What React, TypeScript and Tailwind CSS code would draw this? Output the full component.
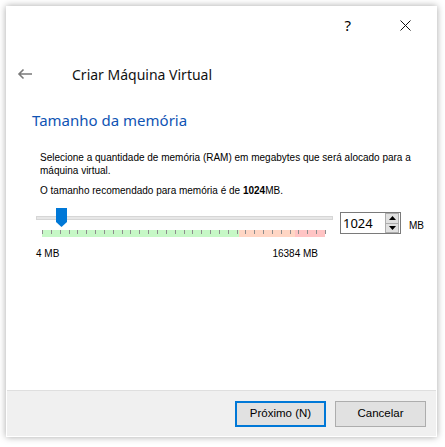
import React from 'react';

const ticks = Array.from({ length: 33 }, (_, i) => i);

function TickBar() {
  const w = 283;
  const step = w / 32;
  return (
    <svg width={w + 1} height={7} className="block">
      <rect x={0} y={0} width={197} height={7} fill="#c6f8c6" />
      <rect x={197} y={0} width={56} height={7} fill="#ffd6c4" />
      <rect x={253} y={0} width={30} height={7} fill="#ffc4c4" />
      {ticks.map((i) => (
        <rect key={i} x={Math.round(i * step)} y={0} width={1} height={4} fill="#8e8e8e" />
      ))}
    </svg>
  );
}

function Spin() {
  return (
    <div className="flex h-[22px] w-[61px] items-center border border-[#7a7a7a] bg-white">
      <span className="flex-1 pl-[2px] text-[13px] leading-none text-black">1024</span>
      <div className="mr-px flex h-[20px] w-[14px] flex-col">
        <div className="flex flex-1 items-center justify-center border border-[#adadad] bg-[#e1e1e1]">
          <svg width="7" height="4"><path d="M0 4 L3.5 0 L7 4 Z" fill="#000" /></svg>
        </div>
        <div className="flex flex-1 items-center justify-center border border-t-0 border-[#adadad] bg-[#e1e1e1]">
          <svg width="7" height="4"><path d="M0 0 L3.5 4 L7 0 Z" fill="#000" /></svg>
        </div>
      </div>
    </div>
  );
}

export default function App() {
  return (
    <div className="h-[447px] w-[445px] bg-white p-[6px] font-['Noto_Sans',sans-serif]">
      <div className="flex h-[431px] w-[431px] flex-col border border-white bg-white shadow-[0_0_7px_rgba(0,0,0,0.35)]">
        <div className="flex h-[36px] items-center justify-end">
          <span className="mr-[49px] text-[15px] text-black">?</span>
          <svg width="11" height="11" className="mr-[25px]" viewBox="0 0 11 11">
            <path d="M0.5 0.5 L10.5 10.5 M10.5 0.5 L0.5 10.5" stroke="#111" strokeWidth="1" />
          </svg>
        </div>

        <div className="mt-[11px] flex h-[40px] items-center">
          <svg width="16" height="12" viewBox="0 0 16 12" className="ml-[10px]">
            <path d="M15 6 H2 M6.5 1.5 L2 6 L6.5 10.5" stroke="#7a7a7a" strokeWidth="1.6" fill="none" />
          </svg>
          <span className="ml-[39px] text-[14px] text-[#111]">Criar Máquina Virtual</span>
        </div>

        <div className="mt-[14px] ml-[25px] text-[15px] leading-[24px] text-[#0f54b4]">Tamanho da memória</div>

        <div className="mt-[19px] ml-[33px] w-[385px] font-['Liberation_Sans',sans-serif] text-[10px] leading-[13px] text-black">
          <p>Selecione a quantidade de memória (RAM) em megabytes que será alocado para a máquina virtual.</p>
          <p className="mt-[7px]">
            O tamanho recomendado para memória é de <b>1024</b>MB.
          </p>
        </div>

        <div className="mt-[11px] flex items-start">
          <div className="ml-[29px] flex w-[297px] flex-col">
            <div className="relative h-[20px]">
              <div className="absolute top-[8px] left-0 h-[4px] w-[297px] border border-[#d6d6d6] bg-[#e7e7e7]" />
              <svg width="11" height="19" className="absolute top-0 left-[20px]" viewBox="0 0 11 19">
                <path d="M0 0 H11 V14 L5.5 19 L0 14 Z" fill="#0078d7" />
              </svg>
            </div>
            <div className="mt-[2px] ml-[6px]">
              <TickBar />
            </div>
            <div className="mt-[9px] flex justify-between pr-[15px] font-['Liberation_Sans',sans-serif] text-[10px] text-black">
              <span>4 MB</span>
              <span>16384 MB</span>
            </div>
          </div>
          <div className="mt-[4px] ml-[7px]">
            <Spin />
          </div>
          <span className="mt-[10px] ml-[8px] font-['Liberation_Sans',sans-serif] text-[10px] text-black">MB</span>
        </div>

        <div className="mt-auto flex h-[46px] items-center justify-end gap-[9px] border-t border-[#dfdfdf] bg-[#f0f0f0] pr-[10px]">
          <button className="h-[26px] w-[91px] border-2 border-[#0078d7] bg-[#e1e1e1] font-['Liberation_Sans',sans-serif] text-[11.5px] text-black">
            Próximo (N)
          </button>
          <button className="h-[26px] w-[91px] border border-[#adadad] bg-[#e1e1e1] font-['Liberation_Sans',sans-serif] text-[11.5px] text-black">
            Cancelar
          </button>
        </div>
      </div>
    </div>
  );
}
